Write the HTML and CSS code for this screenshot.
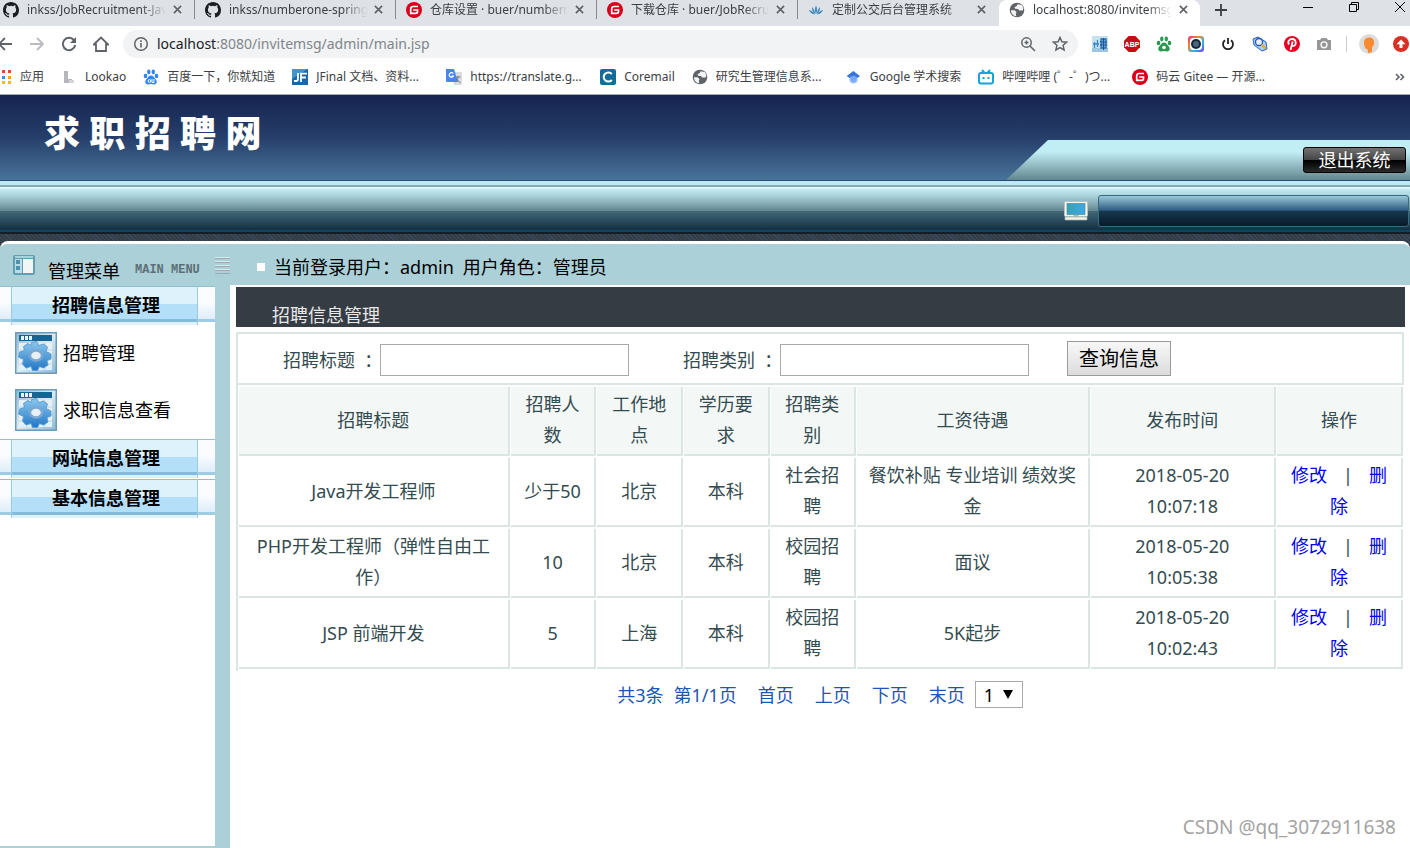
FILE: index.html
```html
<!DOCTYPE html>
<html lang="zh-CN">
<head>
<meta charset="utf-8">
<title>求职招聘网</title>
<link rel="stylesheet" href="styles.css">
</head>
<body>
<svg class="defs" aria-hidden="true">
  <defs>
    <linearGradient id="gear-fill" x1="0" y1="0" x2="0" y2="1"><stop offset="0" stop-color="#8cc8ef"/><stop offset="1" stop-color="#2277c4"/></linearGradient>
    <linearGradient id="tile-fill" x1="0" y1="0" x2="1" y2="1"><stop offset="0" stop-color="#8fb9d4"/><stop offset=".5" stop-color="#dcebf4"/><stop offset="1" stop-color="#8db8d2"/></linearGradient>
    <linearGradient id="rainbow" x1="0" y1="0" x2="1" y2="1"><stop offset="0" stop-color="#f0268f"/><stop offset=".35" stop-color="#f58a1f"/><stop offset=".65" stop-color="#2bb6e8"/><stop offset="1" stop-color="#7d3be0"/></linearGradient>
    <linearGradient id="screen" x1="0" y1="0" x2="1" y2="0"><stop offset="0" stop-color="#36a3b4"/><stop offset="1" stop-color="#3da9e6"/></linearGradient>
    <symbol id="github" viewBox="0 0 16 16"><path fill="#1b1f23" d="M8 0C3.58 0 0 3.58 0 8c0 3.54 2.29 6.53 5.47 7.59.4.07.55-.17.55-.38v-1.49c-2.01.37-2.53-.49-2.69-.94-.09-.23-.48-.94-.82-1.13-.28-.15-.68-.52-.01-.53.63-.01 1.08.58 1.23.82.72 1.21 1.87.87 2.33.66.07-.52.28-.87.51-1.07-1.78-.2-3.64-.89-3.64-3.95 0-.87.31-1.59.82-2.15-.08-.2-.36-1.02.08-2.12 0 0 .67-.21 2.2.82a7.6 7.6 0 0 1 4 0c1.53-1.04 2.2-.82 2.2-.82.44 1.1.16 1.92.08 2.12.51.56.82 1.27.82 2.15 0 3.07-1.87 3.75-3.65 3.95.29.25.54.73.54 1.48v2.19c0 .21.15.46.55.38A8 8 0 0 0 16 8c0-4.42-3.58-8-8-8z"/></symbol>
    <symbol id="gitee" viewBox="0 0 16 16"><circle cx="8" cy="8" r="8" fill="#d9001b"/><path d="M12 4.5H7.2Q4.7 4.5 4.7 7v4.4h4.9q1.9 0 1.9-1.9V8H7.2" fill="none" stroke="#fff" stroke-width="1.7"/></symbol>
    <symbol id="globe" viewBox="0 0 16 16"><circle cx="8" cy="8" r="7.3" fill="#5f6368"/><path d="M8.500 2.300 7.800 4 5.500 5.200l.6 1.500 3 .3 1 1.500h3.700l.6-2.500-1.500-3zM2 8.300h3.500L7.500 10l-.7 1.700.5 2.600C4 14 2 11.500 2 8.300z" fill="#f4f4f4"/></symbol>
    <symbol id="paw" viewBox="0 0 16 16"><ellipse cx="2.5" cy="7" rx="1.8" ry="2.3"/><ellipse cx="5.8" cy="3" rx="1.7" ry="2.4"/><ellipse cx="10.3" cy="3" rx="1.7" ry="2.4"/><ellipse cx="13.5" cy="7" rx="1.8" ry="2.3"/><path d="M8 6.4c2.3 0 3 2.2 4.7 3.8 1.7 1.7 1.3 5-1.4 5.2-1.2.1-2-.4-3.3-.4s-2.100.5-3.300.4c-2.700-.2-3.100-3.500-1.400-5.200C5 8.600 5.700 6.400 8 6.400z"/></symbol>
    <symbol id="cross" viewBox="0 0 10 10"><path d="m1 1 8 8M9 1 1 9" fill="none" stroke="#5f6368" stroke-width="1.8"/></symbol>
    <symbol id="gear-tile" viewBox="0 0 42 42">
      <rect x=".75" y=".75" width="40.500" height="40.500" fill="url(#tile-fill)" stroke="#6b9bbb" stroke-width="1.500"/>
      <path d="M4 3h33v6H4z" fill="#176391"/><path d="M6 4h3v4H6zM10 4h3v4h-3zM14 4h3v4h-3z" fill="#e8f3fa"/>
      <path d="M4 11h33v27H4z" fill="#e6f0f6"/><path d="M4 18h33M4 25h33M4 32h33M12 11v27M21 11v27M30 11v27" stroke="#c2d8e5"/>
      <path d="m16.500 10.500 5-1 2.500 4 4.500-1.500 4 3-1.500 4.500 5 2.500v5l-4 1.500 1 4.500-4.500 3-4-1.500-2 4h-5l-1.500-4-5 1.500-3.500-4 1-4.500-5-2.500 1-5 5-1.500-1-4 4.500-3 3 2z" fill="url(#gear-fill)" stroke="#5c9fd2"/>
      <ellipse cx="21" cy="23.500" rx="6" ry="5" fill="#e8f1f7" stroke="#7ea8d0" stroke-width="2.500"/>
    </symbol>
  </defs>
</svg>

<header class="browser">
  <div class="tabs">
    <div class="tab"><svg class="i16"><use href="#github"/></svg><span class="tab-title">inkss/JobRecruitment-Java</span><button class="close" aria-label="关闭标签页"><svg><use href="#cross"/></svg></button></div>
    <div class="tab"><svg class="i16"><use href="#github"/></svg><span class="tab-title">inkss/numberone-springboot</span><button class="close" aria-label="关闭标签页"><svg><use href="#cross"/></svg></button></div>
    <div class="tab"><svg class="i16"><use href="#gitee"/></svg><span class="tab-title">仓库设置 · buer/numberone</span><button class="close" aria-label="关闭标签页"><svg><use href="#cross"/></svg></button></div>
    <div class="tab"><svg class="i16"><use href="#gitee"/></svg><span class="tab-title">下载仓库 · buer/JobRecruitment</span><button class="close" aria-label="关闭标签页"><svg><use href="#cross"/></svg></button></div>
    <div class="tab tab-last"><svg class="i16" viewBox="0 0 16 16"><path d="M8 12Q6 7.500 8 3.500q2 4 0 8.500M7.500 12Q3.500 9 4 5q3 3 3.500 7M8.500 12Q12.500 9 12 5 9 8 8.500 12M7 12.500Q3 12 .8 8q4 .5 6.200 4.500M9 12.500q4-.5 6.200-4.500-4 .5-6.200 4.500" fill="#3d86bd"/></svg><span class="tab-title">定制公交后台管理系统</span><button class="close" aria-label="关闭标签页"><svg><use href="#cross"/></svg></button></div>
    <div class="tab tab-active"><svg class="i16"><use href="#globe"/></svg><span class="tab-title">localhost:8080/invitemsg</span><button class="close" aria-label="关闭标签页"><svg><use href="#cross"/></svg></button></div>
    <button class="new-tab" aria-label="新标签页"><svg viewBox="0 0 12 12"><path d="M6 0v12M0 6h12" stroke="#3c4043" stroke-width="1.800"/></svg></button>
    <div class="window-controls">
      <button aria-label="最小化"><svg viewBox="0 0 12 12"><path d="M1 6.500h10" stroke="#000"/></svg></button>
      <button aria-label="还原"><svg viewBox="0 0 12 12" fill="none" stroke="#000"><path d="M1.500 3.500h7v7h-7zM3.500 3.500v-2h7v7h-2"/></svg></button>
      <button aria-label="关闭"><svg viewBox="0 0 12 12"><path d="m1 1 10 10M11 1 1 11" stroke="#000"/></svg></button>
    </div>
  </div>

  <div class="toolbar">
    <div class="nav-buttons">
      <button aria-label="后退"><svg viewBox="0 0 16 16" fill="none" stroke="#5f6368" stroke-width="1.800"><path d="M15 8H2M8 2 2 8l6 6"/></svg></button>
      <button aria-label="前进"><svg viewBox="0 0 16 16" fill="none" stroke="#b9bbbe" stroke-width="1.800"><path d="M1 8h13M8 2l6 6-6 6"/></svg></button>
      <button aria-label="刷新"><svg viewBox="0 0 16 16"><path d="M13.300 4.600A6.200 6.200 0 1 0 14.200 9" fill="none" stroke="#5f6368" stroke-width="2"/><path d="M15 1v6H9z" fill="#5f6368"/></svg></button>
      <button aria-label="主页"><svg viewBox="0 0 16 16" fill="none" stroke="#5f6368" stroke-width="1.800"><path d="M.8 8.500 8 1.500l7.200 7H13V15H3V8.500z"/></svg></button>
    </div>
    <div class="omnibox">
      <svg class="i16" viewBox="0 0 16 16"><circle cx="8" cy="8" r="6.300" fill="none" stroke="#5f6368" stroke-width="1.500"/><path d="M7.200 7h1.600v4.500H7.200zM7.200 4.300h1.600v1.600H7.200z" fill="#5f6368"/></svg>
      <span class="url"><span class="host">localhost</span>:8080/invitemsg/admin/main.jsp</span>
      <button aria-label="缩放"><svg viewBox="0 0 16 16" fill="none" stroke="#5f6368" stroke-width="1.500"><circle cx="6.500" cy="6.500" r="4.700"/><path d="m10 10 5 5M4.500 6.500h4M6.500 4.500v4"/></svg></button>
      <button aria-label="收藏"><svg viewBox="0 0 16 16" fill="none" stroke="#5f6368" stroke-width="1.500"><path d="m8 1.500 1.900 4.300 4.700.4-3.500 3.100 1 4.600L8 11.500l-4.100 2.400 1-4.600-3.500-3.100 4.700-.4z"/></svg></button>
    </div>
    <div class="extensions">
      <svg class="i16" viewBox="0 0 16 16"><path d="M0 0h16v16H0z" fill="#c5e2f1"/><path d="M0 12h16v4H0z" fill="#9cc6e0"/><path d="M2.500 6v6M5.500 4v7M1 8h6" stroke="#3d86c0" stroke-width="1.300"/><path d="M9 3h5v9H9z" fill="#6fa9d8" stroke="#286aab" stroke-width="1.300"/><path d="M8 6h7M8 9h7M11.500 2v12" stroke="#1c5595"/></svg>
      <svg class="i16" viewBox="0 0 16 16"><path d="M4.700 0h6.600L16 4.700v6.600L11.300 16H4.700L0 11.300V4.700z" fill="#c70d12"/><text x="8" y="10.500" text-anchor="middle" class="abp">ABP</text></svg>
      <svg class="i16" fill="#2c9951" viewBox="0 0 16 16"><use href="#paw"/><circle cx="8" cy="11.500" r="1.800" fill="#fff"/></svg>
      <svg class="i16" viewBox="0 0 16 16"><rect width="16" height="16" rx="3" fill="url(#rainbow)"/><rect x="2" y="2" width="12" height="12" rx="3" fill="#fff"/><circle cx="8" cy="8" r="5" fill="#15273a"/><circle cx="8" cy="8" r="3" fill="#4d6378"/></svg>
      <svg class="i16" viewBox="0 0 16 16" fill="none" stroke="#202124" stroke-width="1.800"><path d="M5 4.200a5 5 0 1 0 6 0M8 2v6"/></svg>
      <svg class="i16" viewBox="0 0 16 16"><path d="M1 3 6 1l8 5 1 7-5 2-8-6z" fill="#a9cdf3" stroke="#2c64bd"/><circle cx="7" cy="6" r="3.500" fill="#e9f3ff" stroke="#2458ae" stroke-width="1.300"/><path d="m9.500 8.500 4 4" stroke="#e6aa28" stroke-width="2.200"/></svg>
      <svg class="i16" viewBox="0 0 16 16"><circle cx="8" cy="8" r="8" fill="#e60023"/><path d="M5 8.500C3 5 5.700 3 8.300 3c4 0 4.600 6.400 1.200 6.800-1 .1-1.900-.8-1.900-.8M8.700 5.500 6.500 14" fill="none" stroke="#fff" stroke-width="1.800"/></svg>
      <svg class="i16" viewBox="0 0 16 16"><path d="M1 4h3l1.500-2h5L12 4h3v10H1z" fill="#979797"/><circle cx="8" cy="8.800" r="3.600" fill="#fff"/><circle cx="8" cy="8.800" r="2.300" fill="#979797"/></svg>
    </div>
    <div class="profile">
      <svg class="avatar" viewBox="0 0 20 20"><circle cx="10" cy="10" r="10" fill="#dcdcdc"/><path d="M10 3.500c4 0 5.500 2.500 5 6-.4 2.600-2 3.500-2 4.500v4l-4 1-.5-4H7C5.500 13 4.500 9.500 5 7.500 5.500 5 7.500 3.500 10 3.500z" fill="#fa8a2e"/></svg>
      <svg class="i16" viewBox="0 0 16 16"><circle cx="8" cy="8" r="8" fill="#d93025"/><path d="m8 3.500 4.500 4.700h-3V12h-3V8.200h-3z" fill="#fff"/></svg>
    </div>
  </div>

  <nav class="bookmarks">
    <a href="#"><svg class="i16" viewBox="0 0 16 16"><path d="M0 1h3v3H0zM6 1h3v3H6zM12 1h3v3h-3z" fill="#ea4335"/><path d="M0 7h3v3H0z" fill="#34a853"/><path d="M6 7h3v3H6z" fill="#4285f4"/><path d="M12 7h3v3h-3z" fill="#f4a80b"/><path d="M0 12h3v3H0z" fill="#34a853"/><path d="M6 12h3v3H6zM12 12h3v3h-3z" fill="#fbbc05"/></svg><span>应用</span></a>
    <a href="#"><svg class="i16" viewBox="0 0 16 16"><path d="M3 2h4v8h4v4H3z" fill="#b5b7ba"/><path d="M8 11h5v3H8z" fill="#d5d6d8"/></svg><span>Lookao</span></a>
    <a href="#"><svg class="i16" viewBox="0 0 16 16"><g fill="#3385f5"><use href="#paw"/></g><circle cx="6.500" cy="12" r="1.400" fill="none" stroke="#fff"/><path d="M9 10v3.500h2V10" fill="none" stroke="#fff"/></svg><span>百度一下，你就知道</span></a>
    <a href="#"><svg class="i16" viewBox="0 0 16 16"><path d="M0 0h16v16H0z" fill="#1767a9"/><path d="M0 0h16L0 10z" fill="#4594c9"/><path d="M2 12h2q2 0 2-2V4M9 13V4.700h6M9 8.500h5" fill="none" stroke="#fff" stroke-width="1.800"/></svg><span class="wide">JFinal 文档、资料...</span></a>
    <a href="#"><svg class="i16" viewBox="0 0 16 16"><path d="M6 3h10v13H8z" fill="#dadce0"/><path d="M0 0h8l4 13H1q-1 0-1-1z" fill="#4786ee"/><path d="M7.300 4.500A2.300 2.300 0 1 0 7.500 7H5.300" fill="none" stroke="#fff" stroke-width="1.100"/><path d="M9.500 8h5M12 7v1c0 2.500-1 4-2.500 5M10.500 9c.5 2 2 3.500 4 4.500" fill="none" stroke="#737b86"/></svg><span class="wide">https://translate.g...</span></a>
    <a href="#"><svg class="i16" viewBox="0 0 16 16"><rect width="16" height="16" rx="2" fill="#146d99"/><path d="M11.800 5A4.600 4.600 0 1 0 11.800 11" fill="none" stroke="#fff" stroke-width="2"/></svg><span>Coremail</span></a>
    <a href="#"><svg class="i16"><use href="#globe"/></svg><span class="wide">研究生管理信息系...</span></a>
    <a href="#"><svg class="i16" viewBox="0 0 16 16"><path d="M3.500 7v4.500Q4 14.500 7 14.500q4 0 4.500-3V7z" fill="#a0c3fa"/><path d="M7.300 2 14 7l-2.500 2Q7.500 5.500 3.500 9L.7 7z" fill="#3975dd"/><circle cx="7.500" cy="10" r="3" fill="#78a9f7"/></svg><span>Google 学术搜索</span></a>
    <a href="#"><svg class="i16" viewBox="0 0 16 16" fill="none" stroke="#12a5dc" stroke-width="2"><rect x="1" y="4" width="14" height="10.500" rx="2"/><path d="m4 1 2.500 3M12 1 9.500 4M5.500 8v2M10.500 8v2"/></svg><span class="wide">哔哩哔哩 (゜-゜)つ...</span></a>
    <a href="#"><svg class="i16"><use href="#gitee"/></svg><span>码云 Gitee — 开源...</span></a>
    <button class="more" aria-label="更多书签"><svg viewBox="0 0 10 10" fill="none" stroke="#5f6368" stroke-width="1.600"><path d="m1 2 3 3-3 3M5.500 2l3 3-3 3"/></svg></button>
  </nav>
</header>

<div class="banner">
  <h1>求 职 招 聘 网</h1>
  <div class="banner-side"><button class="logout">退出系统</button></div>
</div>
<div class="ribbon">
  <svg class="monitor" viewBox="0 0 24 20"><rect x=".5" y=".5" width="23" height="15" rx="1" fill="#f5f5ee" stroke="#b9c3ba"/><rect x="3" y="2.500" width="18" height="11" fill="url(#screen)" stroke="#45818f" stroke-width=".6"/><path d="M9 14h6l-3 3z" fill="#aab8aa"/><path d="M1 16h22v3H1z" fill="#f2f3ea" stroke="#a2b3a6" stroke-width=".7"/></svg>
  <div class="ribbon-slot"></div>
</div>
<div class="hatch"></div>

<div class="workspace">
  <aside class="sidebar">
    <div class="sidebar-head">
      <svg class="panel-icon" viewBox="0 0 24 22"><rect x="1" y="1" width="22" height="20" rx="2" fill="#5f9fb1"/><path d="M3 5h7v14H3z" fill="#b9dce6"/><path d="M4 6h4v4H4zM4 12h4v4H4z" fill="#4c91ad"/><path d="M11 5h10v14H11z" fill="#f2f5f5"/><path d="M3 2h18v2H3z" fill="#a8d3dd"/></svg>
      <span class="menu-label">管理菜单</span>
      <span class="menu-sub">MAIN MENU</span>
      <svg class="grip" viewBox="0 0 15 18"><path d="M0 1.500h15M0 5.500h15M0 9.500h15M0 13.500h15" stroke="#dce8eb"/><path d="M0 2.500h15M0 6.500h15M0 10.500h15M0 14.500h15M0 17.500h15" stroke="#97acb3"/></svg>
    </div>
    <nav class="menu">
      <button class="section"><span>招聘信息管理</span></button>
      <ul class="links">
        <li><a href="#"><svg><use href="#gear-tile"/></svg>招聘管理</a></li>
        <li><a href="#"><svg><use href="#gear-tile"/></svg>求职信息查看</a></li>
      </ul>
      <button class="section"><span>网站信息管理</span></button>
      <button class="section"><span>基本信息管理</span></button>
    </nav>
  </aside>

  <div class="main-column">
    <div class="status"><i class="bullet"></i><span>当前登录用户：admin</span><span>用户角色：管理员</span></div>
    <main class="content">
      <h2>招聘信息管理</h2>
      <div class="listing">
        <form class="search">
          <label for="title">招聘标题&nbsp; ：</label><input id="title" type="text">
          <label for="kind">招聘类别&nbsp; ：</label><input id="kind" type="text">
          <button type="button">查询信息</button>
        </form>
        <table>
          <colgroup><col class="c-title"><col class="c-small"><col class="c-small"><col class="c-small"><col class="c-small"><col class="c-pay"><col class="c-time"><col class="c-ops"></colgroup>
          <thead><tr><th>招聘标题</th><th>招聘人数</th><th>工作地点</th><th>学历要求</th><th>招聘类别</th><th>工资待遇</th><th>发布时间</th><th>操作</th></tr></thead>
          <tbody>
            <tr><td>Java开发工程师</td><td>少于50</td><td>北京</td><td>本科</td><td>社会招聘</td><td>餐饮补贴 专业培训 绩效奖金</td><td>2018-05-20 10:07:18</td><td><a href="#">修改</a><span class="bar">|</span><a href="#">删除</a></td></tr>
            <tr><td>PHP开发工程师（弹性自由工作）</td><td>10</td><td>北京</td><td>本科</td><td>校园招聘</td><td>面议</td><td>2018-05-20 10:05:38</td><td><a href="#">修改</a><span class="bar">|</span><a href="#">删除</a></td></tr>
            <tr><td>JSP 前端开发</td><td>5</td><td>上海</td><td>本科</td><td>校园招聘</td><td>5K起步</td><td>2018-05-20 10:02:43</td><td><a href="#">修改</a><span class="bar">|</span><a href="#">删除</a></td></tr>
          </tbody>
        </table>
      </div>
      <div class="pager">
        <span class="totals"><span>共3条</span><span>第1/1页</span></span>
        <a href="#">首页</a><a href="#">上页</a><a href="#">下页</a><a href="#">末页</a>
        <span class="page-pick"><select aria-label="页码"><option>1</option></select></span>
      </div>
    </main>
  </div>
</div>
<div class="watermark">CSDN @qq_3072911638</div>
</body>
</html>
```
FILE: styles.css
```css
* { box-sizing: border-box; }

body {
  margin: 0;
  min-height: 100vh;
  display: flex;
  flex-direction: column;
  position: relative;
  overflow-x: hidden;
  background: #fff;
  color: #000;
  font: 18px/24px "Noto Sans", "Noto Sans CJK SC", sans-serif;
}

button { padding: 0; border: 0; background: none; font: inherit; color: inherit; }
a { text-decoration: none; color: inherit; }
svg { display: block; }
.defs { position: absolute; width: 0; height: 0; }
.i16 { width: 16px; height: 16px; flex: none; }

/* Browser frame */
.browser {
  font-size: 12px;
  line-height: 18px;
  color: #3c4043;
  border-bottom: 1px solid #a9abb0;
}
.tabs {
  display: flex;
  height: 26px;
  padding-left: 2px;
  overflow: hidden;
  background: #dee1e6;
}
.tab {
  flex: 0 1 201px;
  min-width: 0;
  height: 19px;
  display: flex;
  align-items: center;
  padding: 0 12px 0 10px;
  border-right: 1px solid #85888d;
}
.tab:first-child { margin-left: -9px; flex-basis: 202px; }
.tab-last { border-right-color: transparent; }
.tab-active { height: 26px; padding-bottom: 7px; background: #fff; border-right: 0; border-radius: 8px 8px 0 0; }
.tab-title {
  flex: 1;
  margin: 0 7px 0 8px;
  overflow: hidden;
  white-space: nowrap;
  -webkit-mask-image: linear-gradient(to right, #000 82%, transparent);
  mask-image: linear-gradient(to right, #000 82%, transparent);
}
.close svg { width: 9px; height: 9px; }
.new-tab { margin-left: 15px; padding-bottom: 7px; }
.new-tab svg { width: 12px; height: 12px; }
.window-controls { display: flex; gap: 34px; margin-left: auto; padding-bottom: 13px; margin-right: 4px; }
.window-controls svg { width: 12px; height: 12px; }

.toolbar { display: flex; align-items: center; height: 36px; padding-right: 1px; overflow: hidden; }
.nav-buttons { display: flex; gap: 16px; margin-left: -3px; }
.nav-buttons svg, .omnibox button svg { width: 16px; height: 16px; }
.omnibox {
  flex: 1;
  display: flex;
  align-items: center;
  gap: 16px;
  height: 28px;
  margin-left: 14px;
  padding: 0 10px;
  border-radius: 14px;
  background: #f1f3f4;
}
.url { flex: 1; margin-left: -8px; font-size: 14px; line-height: 20px; color: #80868b; white-space: nowrap; }
.host { color: #202124; }
.extensions { display: flex; gap: 16px; margin-left: 14px; padding-right: 6px; }
.abp { font: bold 7px "Liberation Sans", sans-serif; fill: #fff; }
.profile { display: flex; align-items: center; gap: 14px; margin-left: 8px; }
.profile::before { content: ""; width: 1px; height: 16px; background: #c9cbce; margin-right: -2px; }
.avatar { width: 20px; height: 20px; }

.bookmarks { display: flex; align-items: center; gap: 17px; height: 32px; padding-bottom: 2px; overflow: hidden; }
.bookmarks a { display: flex; align-items: center; gap: 8px; flex: none; white-space: nowrap; }
.bookmarks a:first-child { margin-left: -4px; }
.wide { width: 113px; overflow: hidden; }
.more { margin-left: auto; margin-right: 5px; }
.more svg { width: 10px; height: 10px; }

/* Site header */
.banner {
  display: flex;
  justify-content: space-between;
  align-items: flex-end;
  height: 86px;
  background: linear-gradient(#15234f, #263f6a 50%, #48739a);
  border-bottom: 1px solid #2c4b78;
}
.banner h1 { margin: 0 0 18px 44px; font-size: 36px; line-height: 56px; font-weight: 900; color: #fff; }
.banner-side {
  width: 404px;
  padding: 7px 4px 7px 0;
  display: flex;
  justify-content: flex-end;
  background: linear-gradient(#c1edf5 30%, #62868e);
  clip-path: polygon(42px 0, 100% 0, 100% 100%, 0 100%);
}
.logout {
  width: 103px;
  height: 26px;
  border: 1px solid #000;
  border-radius: 3px;
  background: linear-gradient(#727272, #444 50%, #000 52%, #2b2b2b);
  color: #fff;
  line-height: 24px;
}
.ribbon {
  display: flex;
  justify-content: flex-end;
  align-items: center;
  gap: 10px;
  height: 53px;
  padding: 6px 1px 0 0;
  background: linear-gradient(#bdeaf3 0 4px, #83aeb5 4px 6px, #def5fa 6px 8px, #c3edf5 8px, #a5cdd6 16px, #62858f 30px, #426976 30px, #28495e 40px, #15303f 49px, #0b4466 49px 51px, #151e27 51px);
}
.monitor { width: 24px; height: 20px; }
.ribbon-slot {
  width: 311px;
  height: 32px;
  border: 1px solid #356b80;
  border-radius: 3px;
  background: linear-gradient(#9cc9d9, #2d5b7f 48%, #17384d 50%, #071b2b);
}
.hatch { height: 15px; margin-bottom: -8px; background: repeating-linear-gradient(45deg, #343c46 0 2px, #38495b 2px 3px); }

/* Workspace */
.workspace {
  flex: 1;
  display: flex;
  background: #abd0d8;
  border-top: 3px solid #fff;
  border-radius: 8px 8px 0 0;
}
.sidebar { flex: 0 0 230px; display: flex; flex-direction: column; padding-bottom: 2px; }
.sidebar-head { display: flex; align-items: center; height: 42px; padding-left: 12px; }
.panel-icon { width: 24px; height: 22px; margin-right: 12px; }
.menu-label { padding-top: 11px; }
.menu-sub { margin-left: 15px; padding-top: 10px; font: bold 12px/16px "Liberation Mono", monospace; color: #5c6f76; white-space: nowrap; }
.grip { width: 15px; height: 18px; margin-left: auto; }
.menu { flex: 1; width: 215px; background: #fff; }
.section {
  display: block;
  width: 100%;
  height: 39px;
  padding: 0 17px 0 11px;
  border-top: 1px solid #91bfda;
  background: linear-gradient(#fafcff 40%, #deedfa 32px, #9fcce3 32px 35px, #fff 35px);
  font-weight: bold;
  line-height: 37px;
}
.section span {
  display: block;
  height: 38px;
  padding-left: 3px;
  border: solid #9bcbe3;
  border-width: 0 1px;
  background: linear-gradient(#def2fc 17px, #b4dff8 17px 32px, #84bbd9 32px 35px, #ddf1fb 35px);
}
.section + .section { margin-top: 1px; }
.links { margin: 0; padding: 7px 0 8px 15px; display: grid; gap: 15px; list-style: none; }
.links a { display: flex; align-items: center; gap: 6px; }
.links svg { width: 42px; height: 42px; }

.main-column { flex: 1; min-width: 0; display: flex; flex-direction: column; }
.status { display: flex; align-items: center; gap: 9px; height: 41px; padding: 4px 0 0 27px; }
.bullet { width: 8px; height: 8px; background: #fff; }
.content { flex: 1; padding: 2px 6px 0; background: #fff; }
.content h2 {
  margin: 0 -1px 5px 0;
  padding: 16px 36px 0;
  font-size: 18px;
  line-height: 24px;
  font-weight: 400;
  background: #363c44;
  color: #e8e8e8;
}
.listing { border: solid #dbe5e1; border-width: 2px 0 0 2px; color: #344b50; }
.search {
  display: flex;
  align-items: center;
  height: 51px;
  padding-left: 45px;
  border: solid #dbe5e1;
  border-width: 0 2px 2px 0;
}
.search label { width: 97px; padding-top: 3px; white-space: nowrap; }
.search input { width: 249px; height: 32px; margin-right: 54px; padding: 0 6px; margin-top: 3px; border: 1px solid #a9a9a9; font: inherit; }
.search button {
  width: 104px;
  height: 35px;
  margin-left: -16px;
  border: 1px solid #9a9a9a;
  background: linear-gradient(#f8f8f8, #dcdcdc);
  color: #000;
  font-size: 20px;
}
table { width: 100%; table-layout: fixed; border-collapse: separate; border-spacing: 1px 2px; }
th, td {
  height: 69px;
  padding: 2px 9px 3px;
  border: solid #dbe5e1;
  border-width: 0 2px 2px 0;
  text-align: center;
  line-height: 31px;
  font-weight: 400;
}
th { background: #f3f7f6; }
.c-title { width: 23.4%; }
.c-small { width: 7.4%; }
.c-pay { width: 20.1%; }
.c-time { width: 16%; }
.c-ops { width: 10.9%; }
td a { color: #0000ee; }
.bar { margin: 0 16px; }

.pager { display: flex; justify-content: center; align-items: center; gap: 21px; margin-top: 10px; color: #1c55b4; }
.totals { display: flex; gap: 10px; }
.page-pick { position: relative; margin-left: -11px; }
.page-pick::after {
  content: "";
  position: absolute;
  top: 9px;
  right: 10px;
  border: solid transparent;
  border-width: 9px 5px 0;
  border-top-color: #000;
  pointer-events: none;
}
.page-pick select {
  display: block;
  width: 48px;
  height: 27px;
  padding: 0 8px;
  appearance: none;
  border: 1px solid #a9a9a9;
  border-radius: 0;
  background: #fff;
  color: #000;
  font: inherit;
}
.watermark { position: absolute; right: 14px; bottom: 8px; font-size: 19px; line-height: 26px; color: #a3a3a3; }
```
